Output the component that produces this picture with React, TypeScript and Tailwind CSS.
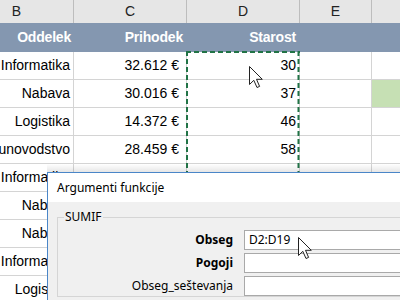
import React from "react";

const rows: [string, string, string][] = [
  ["Informatika", "32.612 €", "30"],
  ["Nabava", "30.016 €", "37"],
  ["Logistika", "14.372 €", "46"],
  ["Računovodstvo", "28.459 €", "58"],
  ["Informatika", "41.230 €", "25"],
  ["Nabava", "22.118 €", "44"],
  ["Nabava", "19.870 €", "51"],
  ["Informatika", "35.402 €", "33"],
  ["Logistika", "17.655 €", "29"],
];

const Cursor = ({ className }: { className: string }) => (
  <svg className={className} width="17" height="25" viewBox="0 0 17 25">
    <path
      d="M1.5 1.5 L1.5 19.5 L5.8 15.3 L9 22.5 L11.6 21.4 L8.5 14.3 L14.3 14.3 Z"
      fill="#fff"
      stroke="#222"
      strokeWidth="1"
      strokeLinejoin="miter"
    />
  </svg>
);

const Row = ({ r, i }: { r: [string, string, string]; i: number }) => (
  <div className="flex h-[28px] border-b border-[#d4d4d4] text-[14px] text-black">
    <div className="w-[74px] flex items-center justify-end overflow-hidden whitespace-nowrap border-r border-[#d4d4d4] pr-[3px]">
      {r[0]}
    </div>
    <div className="w-[113px] flex items-center justify-end border-r border-[#d4d4d4] pr-[7px]">
      {r[1]}
    </div>
    <div className="w-[113px] flex items-center justify-end border-r border-[#d4d4d4] pr-[3px]">
      {r[2]}
    </div>
    <div className="w-[72px] border-r border-[#d4d4d4]" />
    <div className={i === 1 ? "flex-1 bg-[#c6e0b4]" : "flex-1"} />
  </div>
);

export default function App() {
  return (
    <div
      className="relative w-[400px] h-[300px] overflow-hidden bg-white"
      style={{ fontFamily: '"Liberation Sans", Arial, sans-serif' }}
    >
      {/* column letters */}
      <div className="flex h-[23px] bg-[#e6e6e6] text-[14px] text-[#222]">
        <div className="w-[74px] flex items-center justify-end border-r border-[#bdbdbd] pr-[52px]">B</div>
        <div className="w-[113px] flex items-center justify-center border-r border-[#bdbdbd]">C</div>
        <div className="w-[113px] flex items-center justify-center border-r border-[#bdbdbd]">D</div>
        <div className="w-[72px] flex items-center justify-center border-r border-[#bdbdbd]">E</div>
        <div className="flex-1" />
      </div>

      {/* table header */}
      <div className="flex h-[29px] bg-[#8497b0] text-[14px] font-bold text-white tracking-[-0.2px]">
        <div className="w-[74px] flex items-center justify-end pr-[3px]">Oddelek</div>
        <div className="w-[113px] flex items-center justify-end pr-[4px]">Prihodek</div>
        <div className="w-[113px] flex items-center justify-end pr-[4px]">Starost</div>
        <div className="w-[72px]" />
        <div className="flex-1" />
      </div>

      {rows.map((r, i) => (
        <Row key={i} r={r} i={i} />
      ))}

      {/* copy marquee around D */}
      <svg className="absolute left-[186px] top-[51px]" width="114" height="130">
        <g stroke="#217346" strokeWidth="2" strokeDasharray="5 3" fill="none">
          <line x1="0" y1="1" x2="114" y2="1" />
          <line x1="1" y1="0" x2="1" y2="130" />
          <line x1="112.5" y1="0" x2="112.5" y2="130" />
        </g>
      </svg>

      <Cursor className="absolute left-[248px] top-[65px]" />

      {/* dialog shadow */}
      <div className="absolute left-[47px] right-0 top-[164px] h-[8px] bg-gradient-to-b from-black/0 to-black/10" />

      {/* Argumenti funkcije dialog */}
      <div
        className="absolute left-[47px] top-[172px] right-[-60px] bottom-0 flex flex-col border-l border-t border-[#4a86c8] bg-[#f0f0f0]"
        style={{ fontFamily: '"Noto Sans", "Liberation Sans", sans-serif' }}
      >
        <div className="h-[29px] bg-white flex items-center pl-[9px] text-[12px] text-black">
          Argumenti funkcije
        </div>
        <fieldset className="ml-[9px] mt-[6px] border border-[#d5d5d5] pt-[4px]">
          <legend className="ml-[6px] px-[1px] text-[12px] text-black leading-[18px]">SUMIF</legend>
          <div className="flex flex-col gap-[3px] text-[12px] text-black">
            <div className="flex items-center gap-[11px]">
              <div className="w-[175px] text-right font-bold">Obseg</div>
              <div className="flex-1 h-[20px] border border-[#a9a9a9] bg-white flex items-center pl-[4px]">D2:D19</div>
            </div>
            <div className="flex items-center gap-[11px]">
              <div className="w-[175px] text-right font-bold">Pogoji</div>
              <div className="flex-1 h-[20px] border border-[#a9a9a9] bg-white" />
            </div>
            <div className="flex items-center gap-[11px]">
              <div className="w-[175px] text-right">Obseg_seštevanja</div>
              <div className="flex-1 h-[20px] border border-[#a9a9a9] bg-white" />
            </div>
          </div>
        </fieldset>
      </div>

      <Cursor className="absolute left-[297px] top-[236px]" />
    </div>
  );
}
